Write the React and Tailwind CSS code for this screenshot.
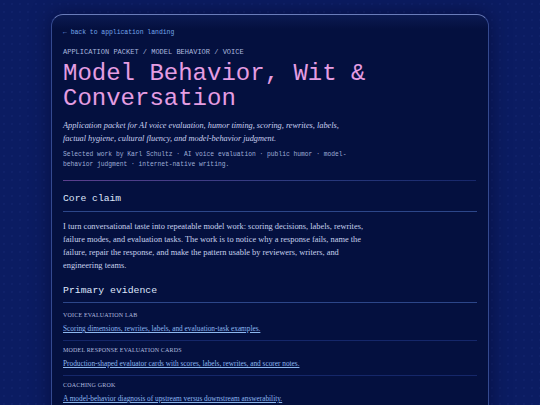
import React from "react";

const mono = "font-['Liberation_Mono','DejaVu_Sans_Mono',monospace]";
const serif = "font-['Liberation_Serif','DejaVu_Serif',serif]";

const items = [
  ["VOICE EVALUATION LAB", "Scoring dimensions, rewrites, labels, and evaluation-task examples."],
  ["MODEL RESPONSE EVALUATION CARDS", "Production-shaped evaluator cards with scores, labels, rewrites, and scorer notes."],
  ["COACHING GROK", "A model-behavior diagnosis of upstream versus downstream answerability."],
];

export default function App() {
  return (
    <div className="w-[540px] h-[405px] overflow-hidden bg-[#0b1c62] bg-[radial-gradient(rgba(110,140,255,0.09)_0.6px,transparent_0.8px)] bg-[length:8px_8px]">
      <div className="mx-auto mt-[14px] w-[438px] h-[420px] rounded-t-[12px] border border-[#34498f] border-t-[#6a7cba] bg-[#04103f] bg-[linear-gradient(180deg,#0b1a52_0px,#04103f_14px)] px-[11px] pt-[13px] shadow-[0_0_20px_rgba(0,0,30,0.5)]">
        <div className={`${mono} text-[6.4px] leading-[10px] text-[#74a6ea]`}>← back to application landing</div>
        <div className={`${mono} mt-[9px] text-[7px] leading-[10px] text-[#aab7de]`}>APPLICATION PACKET / MODEL BEHAVIOR / VOICE</div>
        <h1 className={`${mono} mt-[4px] text-[24px] leading-[25px] text-[#e59de2]`}>Model Behavior, Wit &amp;<br />Conversation</h1>
        <p className={`${serif} italic mt-[8px] w-[290px] text-[8.3px] leading-[13px] text-[#cad1ef]`}>
          Application packet for AI voice evaluation, humor timing, scoring, rewrites, labels, factual hygiene, cultural fluency, and model-behavior judgment.
        </p>
        <p className={`${mono} mt-[5px] w-[290px] text-[6.3px] leading-[10px] text-[#9eacd6]`}>
          Selected work by Karl Schultz · AI voice evaluation · public humor · model-behavior judgment · internet-native writing.
        </p>
        <div className="mt-[10px] mr-[1px] h-px bg-[linear-gradient(90deg,#5c3f8e,#2a3a7e_60%,#17276a)]" />
        <h2 className={`${mono} mt-[11px] pb-[5px] border-b border-[#2c4689] text-[9.7px] leading-[14px] text-[#dfe6fb]`}>Core claim</h2>
        <p className={`${serif} mt-[8px] w-[310px] text-[8.4px] leading-[13px] text-[#c7d0ed]`}>
          I turn conversational taste into repeatable model work: scoring decisions, labels, rewrites, failure modes, and evaluation tasks. The work is to notice why a response fails, name the failure, repair the response, and make the pattern usable by reviewers, writers, and engineering teams.
        </p>
        <h2 className={`${mono} mt-[12px] pb-[4px] border-b border-[#2c4689] text-[9.8px] leading-[14px] text-[#dfe6fb]`}>Primary evidence</h2>
        <div className="mt-[3px]">
          {items.map(([label, link]) => (
            <div key={label} className="pt-[5px] pb-[6px] border-b border-[#15276a]">
              <div className={`${serif} text-[6px] leading-[8px] tracking-[0.03em] text-[#b0bbdf]`}>{label}</div>
              <a className={`${serif} block mt-[5px] text-[7.3px] leading-[10px] text-[#8db7ef] underline underline-offset-[1px]`}>{link}</a>
            </div>
          ))}
        </div>
      </div>
    </div>
  );
}
